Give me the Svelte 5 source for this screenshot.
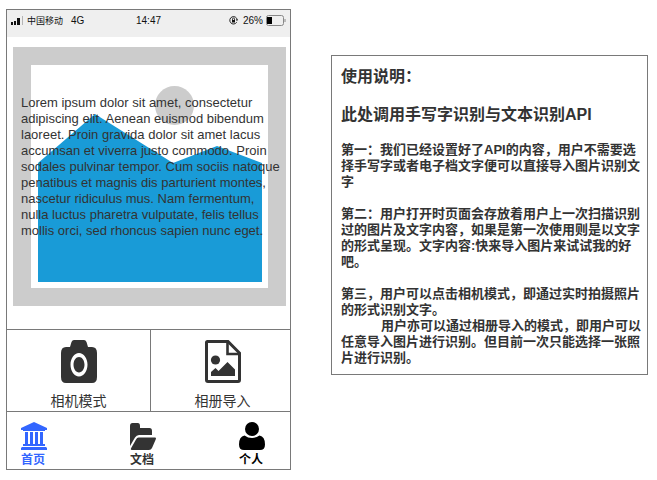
<script>
  const tabs = [
    { id: 'home', label: '首页' },
    { id: 'docs', label: '文档' },
    { id: 'me', label: '个人' }
  ];
</script>

<main class="board">
  <section class="phone">
    <header class="status">
      <div class="side">
        <svg class="signal" width="13" height="9" viewBox="0 0 13 9" aria-hidden="true">
          <path d="M0 6h2v3H0zM3 5h2v4H3zM6 2h3v7H6z" fill="#111" />
          <path d="M11 0h1v9h-1z" fill="#b5b5b5" />
        </svg>
        <span class="carrier">中国移动</span>
        <span>4G</span>
      </div>
      <time>14:47</time>
      <div class="side end">
        <svg width="9" height="9" viewBox="0 0 9 9" aria-hidden="true">
          <path d="M7.7 6.2A3.7 3.7 0 1 1 8.2 4" fill="none" stroke="#222" />
          <path d="M6.8 3.5h2.2L8 5.3z" fill="#222" />
          <path d="M3 4h3v2.5H3z" fill="#111" />
          <path d="M3.5 4V3a1 1 0 0 1 2 0v1" fill="none" stroke="#111" stroke-width=".8" />
        </svg>
        <span class="percent">26%</span>
        <svg width="20" height="11" viewBox="0 0 20 11" aria-hidden="true">
          <rect x=".5" y=".5" width="17" height="10" rx="2" fill="none" stroke="#888" />
          <path d="M1 2h5v7H1z" fill="#000" />
          <path d="M19 4v3" stroke="#888" />
        </svg>
      </div>
    </header>

    <div class="preview">
      <svg class="placeholder" viewBox="0 0 273 259" preserveAspectRatio="none" aria-hidden="true">
        <rect width="273" height="259" fill="#ccc" />
        <rect x="18" y="18" width="237" height="223" fill="#fff" />
        <circle cx="161.500" cy="58.500" r="19.500" fill="#ccc" />
        <path d="M25 116 82 67l78 49 44-17 45 17v119H25z" fill="#199bd7" />
      </svg>
      <p class="lorem">Lorem ipsum dolor sit amet, consectetur adipiscing elit. Aenean euismod bibendum laoreet. Proin gravida dolor sit amet lacus accumsan et viverra justo commodo. Proin sodales pulvinar tempor. Cum sociis natoque penatibus et magnis dis parturient montes, nascetur ridiculus mus. Nam fermentum, nulla luctus pharetra vulputate, felis tellus mollis orci, sed rhoncus sapien nunc eget.</p>
    </div>

    <div class="modes">
      <button type="button">
        <svg width="36" height="43" viewBox="0 0 36 43" aria-hidden="true">
          <path fill="#333" fill-rule="evenodd" d="M5 7h4l1.500-5Q11.300 0 13 0h10q1.700 0 2.500 2L27 7h4q5 0 5 6v24q0 6-5 6H5q-5 0-5-6V13q0-6 5-6zM18 13c-4.700 0-8.500 5.200-8.500 11.700S13.300 36.500 18 36.500s8.500-5.300 8.500-11.800S22.700 13 18 13zm0 4c3 0 5.500 3.400 5.500 7.700S21 32.400 18 32.400s-5.500-3.400-5.500-7.700S15 17 18 17z" />
        </svg>
        <span>相机模式</span>
      </button>
      <button type="button">
        <svg width="36" height="43" viewBox="0 0 36 43" aria-hidden="true">
          <path d="M2.500 1.500h20.500L34.500 13v27q0 1.500-1.500 1.500H3Q1.500 41.500 1.500 40V2.500q0-1 1-1z" fill="none" stroke="#333" stroke-width="3" />
          <path d="M22.500 1v13H35" fill="none" stroke="#333" stroke-width="2.600" />
          <circle cx="10.500" cy="20" r="4.600" fill="#333" />
          <path d="M6 36v-4l4.500-4 3 3 9-9 7.500 7.500V36z" fill="#333" />
        </svg>
        <span>相册导入</span>
      </button>
    </div>

    <nav class="tabs">
      {#each tabs as tab (tab.id)}
        <a href={`#${tab.id}`} class={tab.id}>
          <svg width="26" height="28" viewBox="0 0 26 28" aria-hidden="true">
            {#if tab.id === 'home'}
              <path fill="currentColor" d="M13 0 26 6v2h-2v1H2V8H0V6zM4 10h3v12h2V10h3v12h2V10h3v12h2V10h3v12h2v2H2v-2h2zM1 25h24l1 1v2H0v-2z" />
            {:else if tab.id === 'docs'}
              <path fill="currentColor" d="M0 24V4q0-3 2.500-3h5.300Q10 1 10 4v2h9.500Q22 6 22 9v4H9Q6.500 13 5 15.500z" />
              <path fill="currentColor" d="M8.500 15.500H25q1.500 0 .7 2L22 26q-1 2-3 2H2q-2 0-.8-2L6 17.500q1-2 2.500-2z" />
            {:else}
              <path fill="currentColor" d="M5.500 13.500Q9 16 13 16t7.500-2.500q5.500 1 5.500 9 0 5.500-5 5.500H5q-5 0-5-5.500 0-8 5.500-9z" />
              <circle cx="13" cy="7" r="7" fill="currentColor" />
            {/if}
          </svg>
          <span>{tab.label}</span>
        </a>
      {/each}
    </nav>
  </section>

  <article class="notes">
    <h1>使用说明：</h1>
    <h2>此处调用手写字识别与文本识别API</h2>
    <p>第一：我们已经设置好了API的内容，用户不需要选择手写字或者电子档文字便可以直接导入图片识别文字</p>
    <p>第二：用户打开时页面会存放着用户上一次扫描识别过的图片及文字内容，如果是第一次使用则是以文字的形式呈现。文字内容:快来导入图片来试试我的好吧。</p>
    <div class="steps">
      <p>第三，用户可以点击相机模式，即通过实时拍摄照片的形式识别文字。</p>
      <p class="indent">用户亦可以通过相册导入的模式，即用户可以任意导入图片进行识别。但目前一次只能选择一张照片进行识别。</p>
    </div>
  </article>
</main>

<style>
  :global(body) {
    margin: 0;
    background: #fff;
  }

  .board {
    display: grid;
    grid-template-columns: minmax(0, 285fr) minmax(0, 317fr);
    gap: 40px;
    align-items: start;
    padding: 9px 9px 9px 6px;
    color: #333;
    font-family: 'Liberation Sans', 'Noto Sans CJK SC', sans-serif;
    font-size: 13px;
    line-height: 16px;
  }

  p, h1, h2 {
    margin: 0;
  }

  .phone {
    border: 1px solid #797979;
  }

  .status {
    display: grid;
    grid-template-columns: 1fr auto 1fr;
    align-items: center;
    height: 27px;
    padding: 0 4px 6px;
    background: #efefef;
    color: #111;
    font-size: 10px;
    box-sizing: border-box;
  }

  .side {
    display: flex;
    align-items: center;
    gap: 3px;
  }

  .carrier {
    margin-right: 5px;
    font-size: 9px;
  }

  .end {
    justify-content: flex-end;
  }

  .percent {
    margin-left: 2px;
  }

  .preview {
    display: grid;
    margin: 10px 4px 23px 6px;
  }

  .placeholder,
  .lorem {
    grid-area: 1 / 1;
  }

  .placeholder {
    display: block;
    width: 100%;
    height: 259px;
  }

  .lorem {
    padding: 48px 4px 0 8px;
  }

  .modes {
    display: grid;
    grid-template-columns: 143fr 140fr;
    border-top: 1px solid #797979;
  }

  .modes button {
    display: flex;
    flex-direction: column;
    align-items: center;
    gap: 8px;
    padding: 10px 0 0;
    height: 81px;
    box-sizing: border-box;
    border: 0;
    background: none;
    color: #333;
    font: inherit;
    font-size: 14px;
    line-height: 20px;
  }

  .modes button + button {
    padding-left: 4px;
    border-left: 1px solid #797979;
  }

  .tabs {
    display: flex;
    justify-content: space-between;
    height: 58px;
    padding: 10px 25px 0 14px;
    box-sizing: border-box;
    border-top: 1px solid #797979;
  }

  .tabs a {
    display: flex;
    flex-direction: column;
    align-items: flex-start;
    gap: 2px;
    color: #333;
    font-size: 12px;
    font-weight: bold;
    text-decoration: none;
  }

  .tabs .home {
    color: #36f;
  }

  .tabs .me {
    color: #000;
  }

  .notes {
    display: flex;
    flex-direction: column;
    gap: 16px;
    margin-top: 46px;
    padding: 10px 6px 8px 9px;
    border: 1px solid #797979;
    font-weight: bold;
  }

  h1, h2 {
    font-size: 16px;
    line-height: 22px;
  }

  .indent {
    text-indent: 40px;
  }
</style>
